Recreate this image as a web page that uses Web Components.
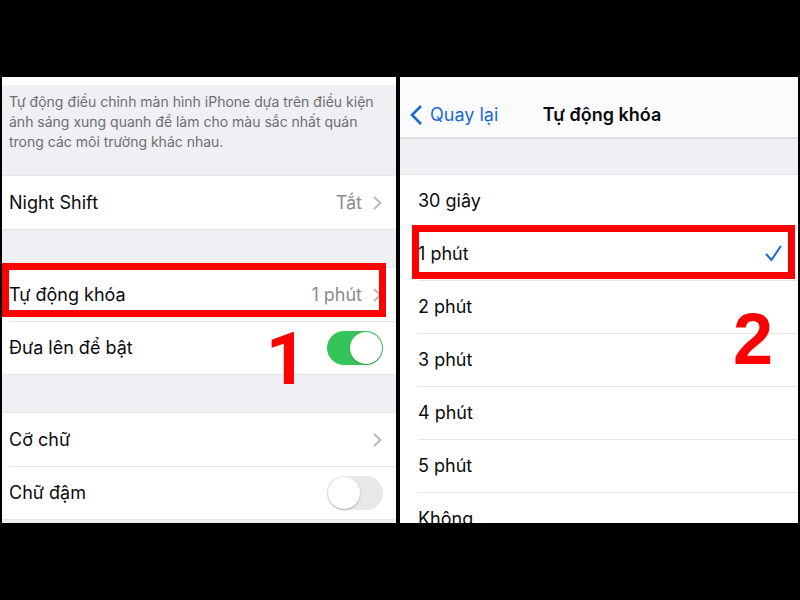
<!DOCTYPE html>
<html lang="vi">
<head>
<meta charset="utf-8">
<meta name="viewport" content="width=device-width, initial-scale=1">
<title>Tự động khóa</title>
<style>
  body {
    margin: 0;
    background: #000;
    color: #0b0b0d;
    font-family: Inter, "Liberation Sans", sans-serif;
    font-size: 18px;
    line-height: 24px;
    --group: #f0eff4;
    --line: #e4e4e7;
    --mark: #fe0000;
    --link: #1b69d2;
  }
</style>
</head>
<body>
<guide-page></guide-page>

<script>
// Red frame and step number laid over a row
class StepMark extends HTMLElement {
  constructor() {
    super();
    this.attachShadow({ mode: 'open' });
  }

  connectedCallback() {
    this.shadowRoot.innerHTML = `
      <style>
        :host {
          position: absolute;
          inset: var(--frame-inset);
          border: 7px solid var(--mark);
          pointer-events: none;
        }
        .number {
          position: absolute;
          top: 100%;
          right: var(--number-right);
          margin-top: var(--number-gap);
          color: var(--mark);
          font: bold 72px/72px var(--number-font, "Liberation Sans"), sans-serif;
        }
      </style>
      <span class="number"><slot></slot></span>
    `;
  }
}

// Row that opens another screen
class LinkRow extends HTMLElement {
  constructor() {
    super();
    this.attachShadow({ mode: 'open' });
  }

  connectedCallback() {
    this.shadowRoot.innerHTML = `
      <style>
        :host {
          display: block;
          position: relative;
        }
        a {
          display: flex;
          align-items: center;
          gap: 11px;
          height: 53px;
          padding: 0 14px 0 7px;
          color: inherit;
          text-decoration: none;
        }
        .label {
          flex: 1;
        }
        .value {
          color: #8b8b8e;
        }
        svg {
          width: 9px;
          height: 14px;
          fill: none;
          stroke: #b9b9bc;
          stroke-width: 2;
        }
      </style>
      <a href="#">
        <span class="label"><slot></slot></span>
        <span class="value"><slot name="value"></slot></span>
        <svg viewBox="0 0 9 14" aria-hidden="true"><path d="M1 1l6.5 6L1 13"/></svg>
      </a>
      <slot name="mark"></slot>
    `;
  }
}

// Row with an on/off switch
class SwitchRow extends HTMLElement {
  constructor() {
    super();
    this.attachShadow({ mode: 'open' });
  }

  connectedCallback() {
    this.shadowRoot.innerHTML = `
      <style>
        :host {
          display: block;
        }
        label {
          display: flex;
          align-items: center;
          justify-content: space-between;
          height: 53px;
          padding: 0 13px 0 7px;
        }
        input {
          appearance: none;
          display: flex;
          width: 56px;
          height: 34px;
          margin: 0;
          padding: 1px;
          box-sizing: border-box;
          border-radius: 17px;
          background: #e8e8ea;
        }
        input::before {
          content: '';
          width: 32px;
          height: 32px;
          border-radius: 50%;
          background: #fff;
          box-shadow: 0 1px 2px rgba(0, 0, 0, 0.25);
        }
        input:checked {
          justify-content: flex-end;
          background: #35c458;
        }
      </style>
      <label for="switch">
        <slot></slot>
        <input type="checkbox" role="switch" id="switch" ${this.hasAttribute('on') ? 'checked' : ''}>
      </label>
    `;
  }
}

// White block of rows, split by inset lines
class RowGroup extends HTMLElement {
  constructor() {
    super();
    this.attachShadow({ mode: 'open' });
  }

  connectedCallback() {
    this.shadowRoot.innerHTML = `
      <style>
        :host {
          display: block;
          background: #fff;
          box-shadow: 0 -1px var(--line), 0 1px var(--line);
        }
        ::slotted(:not(:first-child)) {
          background: linear-gradient(var(--line), var(--line)) 7px 0 / 100% 1px no-repeat;
        }
      </style>
      <slot></slot>
    `;
  }
}

// "Display" settings screen
class DisplayScreen extends HTMLElement {
  constructor() {
    super();
    this.attachShadow({ mode: 'open' });
  }

  connectedCallback() {
    this.shadowRoot.innerHTML = `
      <style>
        :host {
          display: block;
          overflow: hidden;
          background: var(--group);
        }
        p {
          margin: 0;
          padding: 7px 7px 24px;
          border-top: 8px solid #fff;
          color: #6e6e73;
          font-size: 14px;
          line-height: 20px;
        }
        row-group {
          margin-bottom: 39px;
        }
        .lock {
          position: relative;
          z-index: 1;
          --frame-inset: -5px 10px 4px 0;
          --number-right: 72px;
          --number-gap: 14px;
          --number-font: Roboto;
        }
      </style>
      <p>Tự động điều chỉnh màn hình iPhone dựa trên điều kiện ánh sáng xung quanh để làm cho màu sắc nhất quán trong các môi trường khác nhau.</p>
      <row-group>
        <link-row>Night Shift<span slot="value">Tắt</span></link-row>
      </row-group>
      <row-group class="lock">
        <link-row>Tự động khóa<span slot="value">1 phút</span><step-mark slot="mark">1</step-mark></link-row>
        <switch-row on>Đưa lên để bật</switch-row>
      </row-group>
      <row-group>
        <link-row>Cỡ chữ</link-row>
        <switch-row>Chữ đậm</switch-row>
      </row-group>
    `;
  }
}

// Auto-lock screen, one time can be picked
class LockScreen extends HTMLElement {
  constructor() {
    super();
    this.attachShadow({ mode: 'open' });
    this.times = ['30 giây', '1 phút', '2 phút', '3 phút', '4 phút', '5 phút', 'Không'];
    this.selected = 1;
  }

  connectedCallback() {
    this.shadowRoot.innerHTML = `
      <style>
        :host {
          display: block;
          overflow: hidden;
          background: #fff;
        }
        header {
          display: grid;
          grid-template-columns: 1fr auto 1fr;
          align-items: center;
          padding: 26px 4px 10px 10px;
          border-bottom: 2px solid #dedee1;
          background: #fbfbfd;
        }
        button {
          display: flex;
          align-items: center;
          gap: 8px;
          justify-self: start;
          padding: 0;
          border: 0;
          background: none;
          color: var(--link);
          font: inherit;
        }
        button svg {
          width: 12px;
          height: 20px;
          fill: none;
          stroke: currentColor;
          stroke-width: 2.5;
        }
        h1 {
          margin: 0;
          font-size: 18px;
          font-weight: 600;
        }
        fieldset {
          min-width: 0;
          margin: 0;
          padding: 35px 0 0;
          border: 0;
          background: linear-gradient(var(--group), var(--group)) 0 0 / 100% 35px no-repeat;
        }
        .time {
          display: flex;
          align-items: center;
          justify-content: space-between;
          position: relative;
          height: 53px;
          padding: 0 16px 0 18px;
          background: linear-gradient(var(--line), var(--line)) 18px 0 / 100% 1px no-repeat;
        }
        .time:first-of-type {
          background-position-x: 0;
        }
        input {
          position: absolute;
          opacity: 0;
        }
        .time svg {
          width: 17px;
          height: 17px;
          fill: none;
          stroke: var(--link);
          stroke-width: 2;
          stroke-linecap: round;
          stroke-linejoin: round;
          visibility: hidden;
        }
        input:checked ~ svg {
          visibility: visible;
        }
        step-mark {
          z-index: 1;
          --frame-inset: -2px 3px 1px 12px;
          --number-right: 15px;
          --number-gap: 31px;
        }
      </style>
      <header>
        <button type="button">
          <svg viewBox="0 0 12 20" aria-hidden="true"><path d="M11 1L2 10l9 9"/></svg>
          Quay lại
        </button>
        <h1>Tự động khóa</h1>
      </header>
      <fieldset aria-label="Tự động khóa">
        ${this.times.map((time, index) => `
          <label class="time" for="time-${index}">
            <span>${time}</span>
            <input type="radio" name="time" id="time-${index}" ${index === this.selected ? 'checked' : ''}>
            <svg viewBox="0 0 17 17" aria-hidden="true"><path d="M1.5 9.5L6.5 15 15.5 1.5"/></svg>
            ${index === this.selected ? '<step-mark>2</step-mark>' : ''}
          </label>
        `).join('')}
      </fieldset>
    `;
  }
}

// Both screens side by side on black
class GuidePage extends HTMLElement {
  constructor() {
    super();
    this.attachShadow({ mode: 'open' });
  }

  connectedCallback() {
    this.shadowRoot.innerHTML = `
      <style>
        :host {
          display: grid;
          grid-template-columns: 394fr 398fr;
          grid-template-rows: minmax(0, 1fr);
          gap: 4px;
          box-sizing: border-box;
          height: 100vh;
          padding: 77px 2px;
        }
      </style>
      <display-screen></display-screen>
      <lock-screen></lock-screen>
    `;
  }
}

customElements.define('step-mark', StepMark);
customElements.define('link-row', LinkRow);
customElements.define('switch-row', SwitchRow);
customElements.define('row-group', RowGroup);
customElements.define('display-screen', DisplayScreen);
customElements.define('lock-screen', LockScreen);
customElements.define('guide-page', GuidePage);
</script>
</body>
</html>
